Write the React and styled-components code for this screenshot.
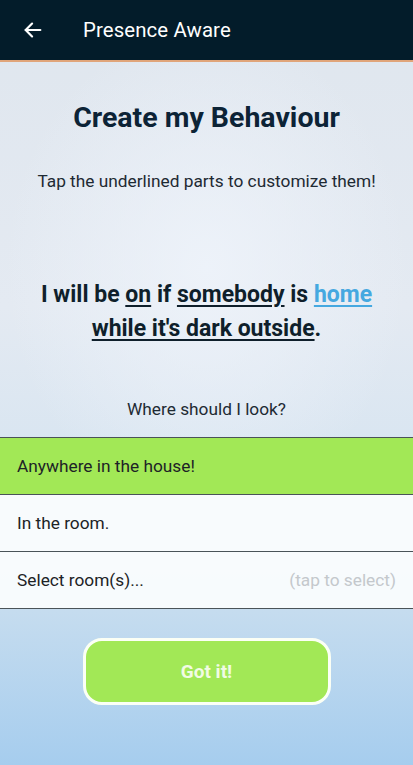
import React, { useState } from 'react'
import styled, { createGlobalStyle } from 'styled-components'

const GlobalStyle = createGlobalStyle`
   html, body {
      margin: 0;
      padding: 0;
   }
   body {
      font-family: Roboto, 'Noto Sans', sans-serif;
   }
`

const Screen = styled.div`
   width: 413px;
   height: 765px;
   display: flex;
   flex-direction: column;
   overflow: hidden;
   background:
      radial-gradient(ellipse 70% 45% at 50% 35%, rgba(238, 243, 250, 0.9), rgba(238, 243, 250, 0) 70%),
      linear-gradient(to bottom, #dfe6ee 0%, #e4eaf2 40%, #d8e5f1 60%, #c5dcef 80%, #a6cdee 100%);
`

const Header = styled.header`
   height: 60px;
   flex: none;
   display: flex;
   align-items: center;
   background-color: #031c2a;
   border-bottom: 2px solid #e0a57a;
   color: #ffffff;
`

const BackButton = styled.button`
   width: 64px;
   height: 60px;
   display: flex;
   align-items: center;
   justify-content: center;
   padding: 0 0 0 1px;
   background: none;
   border: none;
   color: #ffffff;
`

const HeaderTitle = styled.h1`
   margin: 0 0 0 19px;
   font-size: 20.4px;
   font-weight: 400;
   letter-spacing: 0.1px;
`

const Content = styled.main`
   flex: 1;
   display: flex;
   flex-direction: column;
   align-items: center;
`

const Title = styled.h2`
   margin: 39px 0 0;
   font-size: 28.5px;
   font-weight: 700;
   color: #0c2336;
   line-height: 34px;
`

const Subtitle = styled.p`
   margin: 36px 0 0;
   font-size: 17.3px;
   color: #1e2a33;
   line-height: 20px;
`

const Sentence = styled.p`
   margin: 87px 0 0;
   font-size: 23px;
   font-weight: 700;
   color: #0f1f2b;
   line-height: 34px;
   text-align: center;
`

const Part = styled.span`
   text-decoration: underline;
   text-decoration-thickness: 2px;
   text-underline-offset: 3px;
   color: ${props => (props.accent ? '#45a8e0' : '#0f1f2b')};
`

const Question = styled.p`
   margin: 53px 0 0;
   font-size: 17.3px;
   color: #1e2a33;
   line-height: 20px;
`

const Options = styled.div`
   width: 100%;
   margin-top: 18px;
   display: flex;
   flex-direction: column;
   border-top: 1px solid #4a5358;
`

const Option = styled.div`
   height: 56px;
   display: flex;
   align-items: center;
   justify-content: space-between;
   padding: 0 17px;
   background-color: ${props => (props.selected ? '#a2e856' : 'rgba(250, 252, 253, 0.95)')};
   border-bottom: 1px solid #4a5358;
   font-size: 17.3px;
   color: #1d2326;
   cursor: pointer;
`

const Hint = styled.span`
   color: #c4c8cc;
`

const DoneButton = styled.button`
   margin-top: 29px;
   width: 248px;
   height: 67px;
   border: 3px solid #fbfff5;
   border-radius: 19px;
   background-color: #a2e856;
   font-family: Roboto, 'Noto Sans', sans-serif;
   font-size: 19px;
   font-weight: 700;
   color: #f1fbe4;
   cursor: pointer;
`

const options = [
   { id: 'house', label: 'Anywhere in the house!' },
   { id: 'room', label: 'In the room.' },
   { id: 'select', label: 'Select room(s)...', hint: '(tap to select)' },
]

const App = () => {
   const [selected, setSelected] = useState('house')

   return (
      <Screen>
         <GlobalStyle />
         <Header>
            <BackButton aria-label='Back'>
               <svg width='22' height='22' viewBox='0 0 24 24' fill='none' stroke='currentColor' strokeWidth='2.4' strokeLinecap='round' strokeLinejoin='round'>
                  <path d='M20 12H4' />
                  <path d='M11 5l-7 7 7 7' />
               </svg>
            </BackButton>
            <HeaderTitle>Presence Aware</HeaderTitle>
         </Header>
         <Content>
            <Title>Create my Behaviour</Title>
            <Subtitle>Tap the underlined parts to customize them!</Subtitle>
            <Sentence>
               I will be <Part>on</Part> if <Part>somebody</Part> is <Part accent>home</Part>
               <br />
               <Part>while it's dark outside</Part>.
            </Sentence>
            <Question>Where should I look?</Question>
            <Options>
               {options.map(option => (
                  <Option key={option.id} selected={selected === option.id} onClick={() => setSelected(option.id)}>
                     <span>{option.label}</span>
                     {option.hint && <Hint>{option.hint}</Hint>}
                  </Option>
               ))}
            </Options>
            <DoneButton>Got it!</DoneButton>
         </Content>
      </Screen>
   )
}

export default App
